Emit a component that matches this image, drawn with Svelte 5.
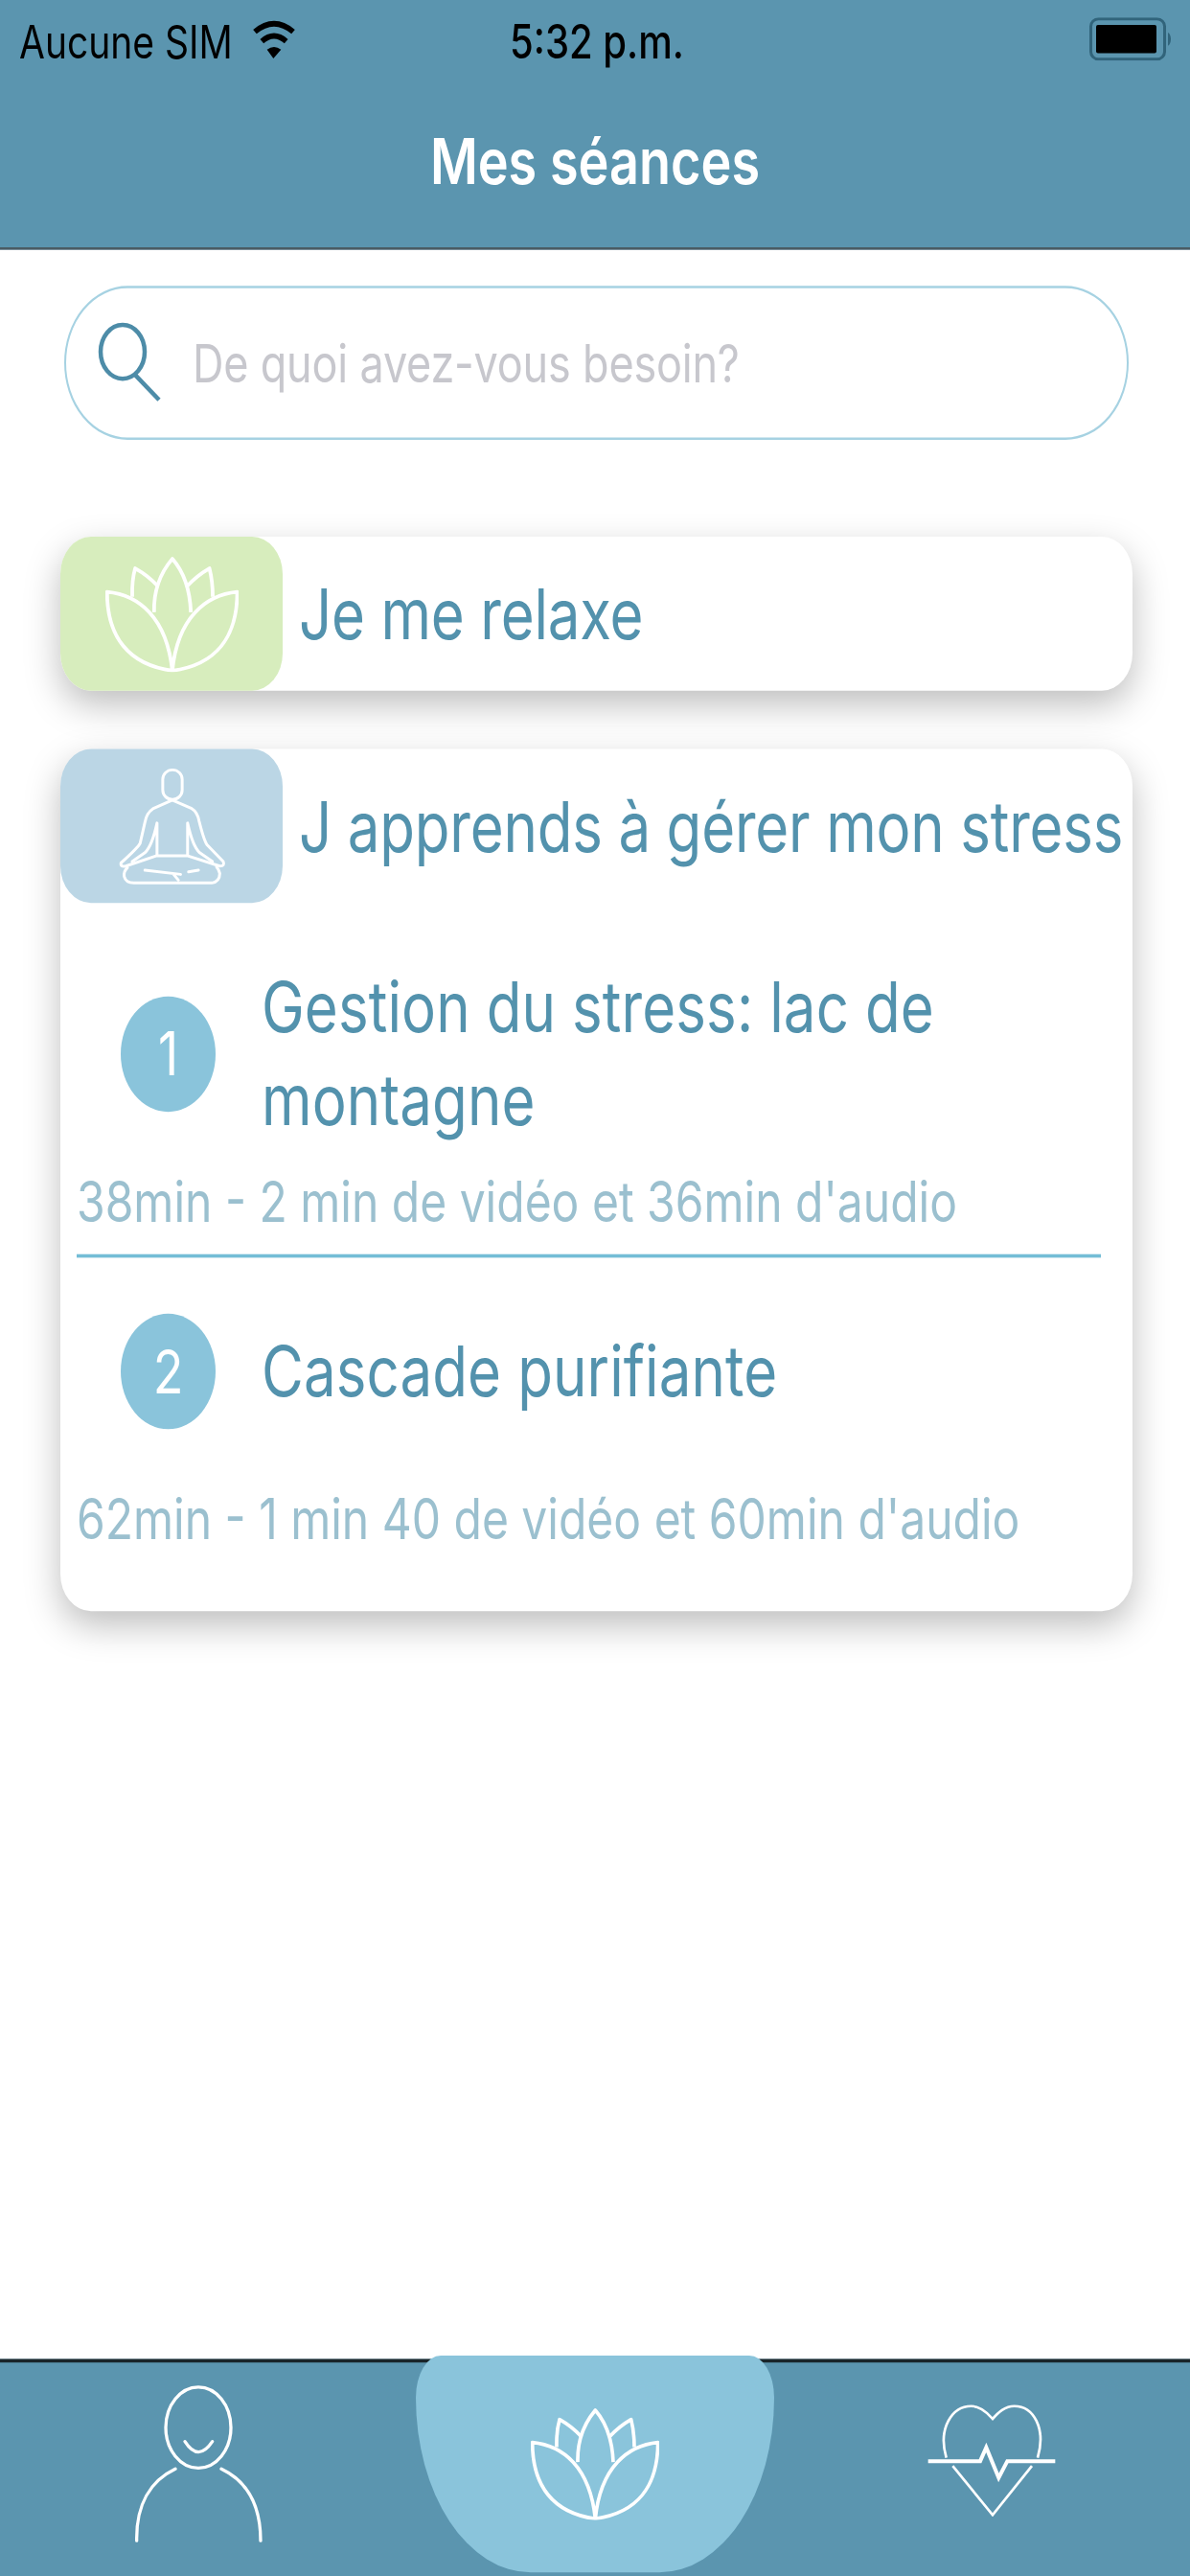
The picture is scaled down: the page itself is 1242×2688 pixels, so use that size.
<script>
  const items = [
    { n: 1, title: 'Gestion du stress: lac de montagne', meta: "38min - 2 min de vidéo et 36min d'audio" },
    { n: 2, title: 'Cascade purifiante', meta: "62min - 1 min 40 de vidéo et 60min d'audio" }
  ];
</script>

{#snippet lotus()}
  <svg class="lotus" viewBox="100 95 402 352" preserveAspectRatio="none" fill="none" stroke="#fff" stroke-width="11" stroke-linejoin="round">
    <path d="M302 443C170 425 105 340 105 203C200 212 285 280 302 443C318 280 405 212 498 203C498 340 434 425 302 443Z" />
    <path d="M247 265C245 190 270 140 302 102C335 140 355 190 358 265" />
    <path d="M181 218C180 180 183 155 190 131C215 145 240 165 258 185" />
    <path d="M424 218C424 180 420 155 414 131C390 145 365 165 347 185" />
  </svg>
{/snippet}

<div class="page">
<div class="screen">
  <header class="head">
    <div class="status">
      <span class="carrier">Aucune SIM</span>
      <svg class="wifi" viewBox="35 20 150 135" preserveAspectRatio="none" aria-hidden="true">
        <path d="M50 68Q110 18 170 68" fill="none" stroke="#000" stroke-width="17" />
        <path d="M72 98Q110 65 148 98" fill="none" stroke="#000" stroke-width="17" />
        <path d="M88 124Q110 108 132 124L108 152Z" />
      </svg>
      <span class="time">5:32 p.m.</span>
      <svg class="battery" viewBox="0 0 88 46" preserveAspectRatio="none" aria-hidden="true">
        <rect x="1.5" y="1.5" width="77" height="43" rx="8" fill="none" stroke="#31647b" stroke-width="3" />
        <rect x="7" y="8" width="63" height="30" rx="2" fill="#000" />
        <path d="M82 16C86 18 86 28 82 30Z" fill="#31647b" />
      </svg>
    </div>
    <h1>Mes séances</h1>
  </header>

  <main class="content">
    <div class="search">
      <svg class="glass" viewBox="0 0 70 85" preserveAspectRatio="none" fill="none" stroke="#4d8ca8" stroke-width="4.5" aria-hidden="true">
        <ellipse cx="26" cy="31" rx="23" ry="28" />
        <path d="M39 55L64 81" />
      </svg>
      <span class="placeholder">De quoi avez-vous besoin?</span>
    </div>

    <section class="card">
      <div class="row">
        <div class="tile green">{@render lotus()}</div>
        <span class="cat">Je me relaxe</span>
      </div>
    </section>

    <section class="card open">
      <div class="row">
        <div class="tile blue">
          <svg class="yogi" viewBox="245 783 340 370" preserveAspectRatio="none" fill="none" stroke="#fff" stroke-width="9" stroke-linejoin="round" stroke-linecap="round">
            <rect x="386" y="790" width="61" height="93" rx="30" />
            <path d="M416 885L355 912Q335 925 330 955L315 1020Q310 1032 255 1082Q252 1096 270 1092L365 1060H465L565 1092Q582 1092 576 1078L525 1025Q515 1010 500 950Q495 922 475 910Z" />
            <path d="M368 957V1058M368 957Q352 1030 330 1050L290 1078" />
            <path d="M464 957V1058M464 957Q480 1030 502 1050L542 1078" />
            <path d="M275 1097Q262 1110 265 1125Q270 1145 295 1145H540Q565 1140 565 1115Q562 1102 555 1095" />
            <path d="M330 1105L442 1118M420 1118L435 1136M467 1110L498 1105" />
          </svg>
        </div>
        <span class="cat">J apprends à gérer mon stress</span>
      </div>

      <ul class="list">
        {#each items as item, i}
          <li class:first={i === 0}>
            <div class="item">
              <span class="num">{item.n}</span>
              <span class="title">{item.title}</span>
            </div>
            <p class="meta">{item.meta}</p>
          </li>
        {/each}
      </ul>
    </section>
  </main>

  <nav class="tabs">
    <svg class="person" viewBox="110 50 420 505" preserveAspectRatio="none" fill="none" stroke="#fff" stroke-width="10" stroke-linecap="round">
      <ellipse cx="320" cy="188" rx="102" ry="127" />
      <path d="M278 232Q320 298 364 232" />
      <path d="M248 318C170 355 125 430 127 543M392 318C470 355 515 430 515 543" />
    </svg>
    <div class="active">{@render lotus()}</div>
    <svg class="heart" viewBox="50 95 408 352" preserveAspectRatio="none" fill="none" stroke="#fff" stroke-width="8">
      <path d="M112 262C85 170 130 100 190 100C215 100 240 120 257 140C275 120 295 100 325 100C385 100 425 170 398 262" />
      <path d="M132 288L257 442L380 288" />
      <path d="M55 273H218L237 230L276 325L303 273H453" stroke-width="12" />
    </svg>
  </nav>
</div>
</div>

<style>
  :global(body) {
    margin: 0;
    background: #fff;
  }
  .page {
    width: 1242px;
    height: 2688px;
    overflow: hidden;
  }
  .screen {
    width: 1242px;
    height: 2208px;
    display: flex;
    flex-direction: column;
    transform: scale(1, 1.2174);
    transform-origin: 0 0;
    font-family: Inter, "Noto Sans", sans-serif;
    color: #5392ad;
    background: #fff;
    filter: blur(0.5px);
  }
  .head {
    height: 212px;
    flex: none;
    background: #5b95af;
    border-bottom: 2px solid #4a5a62;
    display: flex;
    flex-direction: column;
    align-items: center;
    box-sizing: content-box;
  }
  .status {
    width: 100%;
    height: 70px;
    position: relative;
    display: flex;
    align-items: center;
    justify-content: center;
    color: #000;
    font-size: 39px;
  }
  .carrier {
    position: absolute;
    left: 20px;
  }
  .wifi {
    position: absolute;
    left: 261px;
    top: 14px;
    width: 50px;
    height: 37px;
  }
  .time {
    font-size: 40px;
    font-weight: 500;
    margin-left: 4px;
  }
  .battery {
    position: absolute;
    left: 1137px;
    top: 15px;
    width: 88px;
    height: 37px;
  }
  h1 {
    margin: 31px 0 0;
    color: #fff;
    font-size: 54px;
    line-height: 76px;
    font-weight: 600;
  }
  .content {
    flex: 1;
    padding: 31px 60px 0 63px;
    display: flex;
    flex-direction: column;
  }
  .search {
    height: 132px;
    margin: 0 4px;
    box-sizing: border-box;
    border: 2px solid #a6d2e2;
    border-radius: 75px;
    display: flex;
    align-items: center;
    gap: 29px;
    padding-left: 33px;
    color: #c7c7cd;
    font-size: 45px;
    letter-spacing: -0.2px;
  }
  .glass {
    width: 70px;
    height: 70px;
    flex: none;
  }
  .card {
    margin-top: 83px;
    background: #fff;
    border-radius: 32px;
    box-shadow: 0 12px 34px rgba(0, 0, 0, 0.26);
  }
  .card.open {
    margin-top: 50px;
    padding-bottom: 34px;
  }
  .row {
    display: flex;
    align-items: center;
    gap: 17px;
  }
  .tile {
    width: 232px;
    height: 132px;
    border-radius: 32px;
    display: flex;
    align-items: center;
    justify-content: center;
    flex: none;
  }
  .green { background: #d7edbd; }
  .blue { background: #bbd6e5; }
  .lotus {
    width: 139px;
    height: 99px;
  }
  .yogi {
    width: 113px;
    height: 101px;
  }
  .cat {
    font-size: 60px;
    letter-spacing: -0.2px;
    white-space: nowrap;
  }
  .list {
    list-style: none;
    margin: 0;
    padding: 32px 33px 0 17px;
  }
  .list li.first {
    border-bottom: 3px solid #74bdd6;
  }
  .item {
    display: flex;
    align-items: center;
    height: 164px;
    padding-top: 15px;
    margin-bottom: 14px;
  }
  .num {
    width: 99px;
    height: 99px;
    margin-left: 46px;
    margin-right: 48px;
    border-radius: 50%;
    background: #8ac4db;
    color: #fff;
    font-size: 52px;
    font-weight: 400;
    flex: none;
    display: flex;
    align-items: center;
    justify-content: center;
  }
  .title {
    font-size: 60px;
    line-height: 79px;
    letter-spacing: 0.1px;
  }
  .meta {
    margin: 0;
    color: #9bc0cf;
    font-size: 48px;
    line-height: 62px;
    padding-bottom: 14px;
    white-space: nowrap;
  }
  .tabs {
    height: 183px;
    flex: none;
    border-top: 3px solid #1a2429;
    background: #5b95af;
    position: relative;
    display: flex;
  }
  .person {
    position: absolute;
    left: 137px;
    top: 18px;
    width: 140px;
    height: 138px;
  }
  .active {
    position: absolute;
    left: 434px;
    top: -6px;
    width: 374px;
    height: 186px;
    background: #8ac4db;
    border-radius: 26px 26px 120px 120px / 36px 36px 150px 150px;
    display: flex;
    align-items: center;
    justify-content: center;
  }
  .active .lotus {
    width: 134px;
    height: 96px;
  }
  .heart {
    position: absolute;
    left: 967px;
    top: 36px;
    width: 136px;
    height: 96px;
  }
</style>
